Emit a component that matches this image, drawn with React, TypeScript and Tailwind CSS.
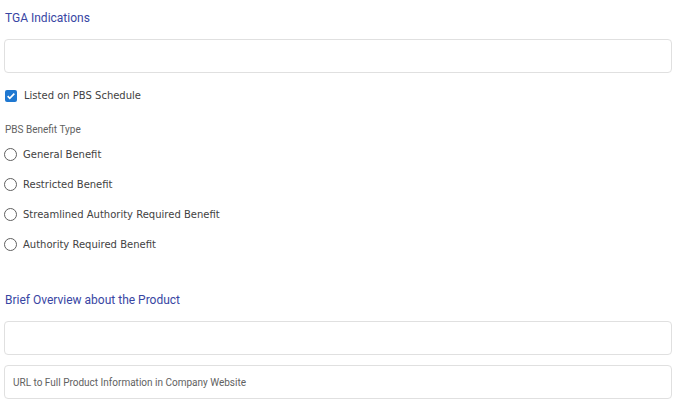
import React from 'react';

const options = [
  'General Benefit',
  'Restricted Benefit',
  'Streamlined Authority Required Benefit',
  'Authority Required Benefit',
];

const Radio: React.FC<{ label: string }> = ({ label }) => (
  <label className="flex items-center h-[30px] gap-[6px]">
    <span className="w-[13px] h-[13px] rounded-full border-[1.5px] border-[#5f5f5f] shrink-0" />
    <span className="text-[10px] text-[#424242] font-['DejaVu_Sans',sans-serif]">{label}</span>
  </label>
);

export default function App() {
  return (
    <div className="w-[688px] h-[404px] bg-white px-[4px] pt-[10px] font-['Roboto',sans-serif] overflow-hidden">
      <h2 className="text-[12px] leading-[16px] text-[#3846a3] pl-px">TGA Indications</h2>
      <div className="mt-[13px] w-[668px] h-[34px] border border-[#e0e0e0] rounded-[4px]" />

      <label className="flex items-center gap-[7px] mt-[15px] pl-px">
        <span className="w-[12px] h-[12px] rounded-[2px] bg-[#1f78d1] flex items-center justify-center">
          <svg viewBox="0 0 24 24" className="w-[10px] h-[10px]" fill="none" stroke="white" strokeWidth={4}>
            <path d="M4 12.5l5 5L20 6.5" />
          </svg>
        </span>
        <span className="text-[10px] text-[#424242] font-['DejaVu_Sans',sans-serif]">Listed on PBS Schedule</span>
      </label>

      <div className="mt-[19px] text-[10px] text-[#616161] pl-px">PBS Benefit Type</div>
      <div className="mt-[2px] flex flex-col">
        {options.map((o) => (
          <Radio key={o} label={o} />
        ))}
      </div>

      <h2 className="mt-[33px] text-[12px] leading-[16px] text-[#3846a3] pl-px">Brief Overview about the Product</h2>
      <div className="mt-[13px] w-[668px] h-[34px] border border-[#e0e0e0] rounded-[4px]" />
      <div className="mt-[10px] w-[668px] h-[34px] border border-[#e0e0e0] rounded-[4px] flex items-center px-[8px]">
        <span className="text-[10px] text-[#616161]">URL to Full Product Information in Company Website</span>
      </div>
    </div>
  );
}
